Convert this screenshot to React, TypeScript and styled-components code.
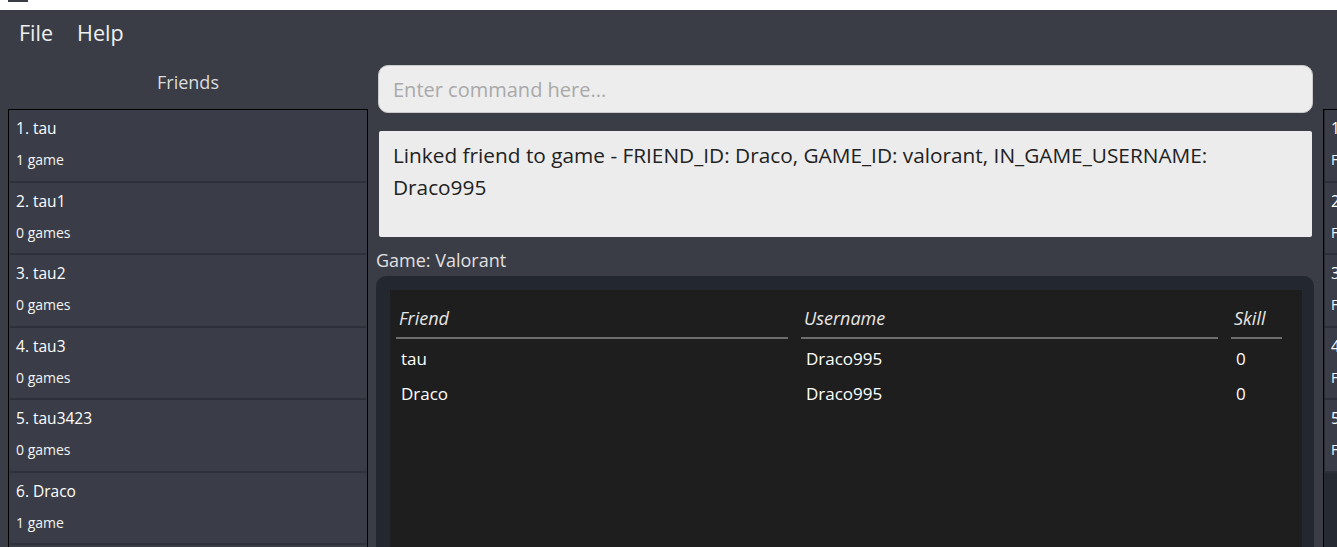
import styled, { createGlobalStyle } from "styled-components"

const GlobalStyle = createGlobalStyle`
  html, body {
    margin: 0;
    padding: 0;
    background: #3a3d46;
    overflow: hidden;
  }
  body {
    font-family: "Open Sans", "Liberation Sans", sans-serif;
  }
`

// Window chrome
const Window = styled.div`
  width: 1337px;
  height: 547px;
  overflow: hidden;
  background: #3a3d46;
  display: flex;
  flex-direction: column;
`

const TitleStrip = styled.div`
  height: 10px;
  background: #ffffff;
  flex-shrink: 0;
  padding-left: 8px;
`

const TitleIcon = styled.div`
  width: 20px;
  height: 2px;
  background: #3a3d46;
`

const MenuBar = styled.div`
  height: 45px;
  flex-shrink: 0;
  display: flex;
  align-items: center;
  gap: 24px;
  padding-left: 19px;
  color: #f0f0f0;
  font-size: 21.5px;
`

const MenuItem = styled.span`
  line-height: 45px;
`

// Main layout
const Body = styled.div`
  display: grid;
  grid-template-columns: 376px 939px 368px;
  flex: 1;
  min-height: 0;
`

const SideColumn = styled.div<{ $side: "left" | "right" }>`
  display: flex;
  flex-direction: column;
  padding-left: 8px;
  padding-right: ${p => (p.$side === "left" ? "8px" : "0")};
  min-height: 0;
`

const PanelTitle = styled.div`
  height: 54px;
  line-height: 54px;
  text-align: center;
  font-size: 18px;
  color: #dcdcdc;
  flex-shrink: 0;
`

const ListView = styled.div<{ $empty?: string }>`
  flex: 1;
  border: 1px solid #000;
  border-bottom: none;
  padding: 0 1px;
  background: ${p => p.$empty ?? "#3a3d46"};
  overflow: hidden;
`

const Cell = styled.div`
  height: 72.5px;
  box-sizing: border-box;
  background: #3a3d47;
  border-bottom: 2.5px solid #2c3038;
  padding: 8px 0 0 6px;
`

const CellTitle = styled.div`
  font-size: 15.5px;
  font-weight: 500;
  line-height: 20px;
  color: #ffffff;
  white-space: nowrap;
`

const CellSub = styled.div`
  font-size: 14px;
  line-height: 20px;
  margin-top: 12px;
  color: #f4f4f4;
  white-space: nowrap;
`

// Center column
const Center = styled.div`
  display: flex;
  flex-direction: column;
  padding-top: 10px;
  min-height: 0;
`

const CommandBox = styled.input`
  height: 48px;
  margin: 0 2px;
  box-sizing: border-box;
  border: 1px solid #c9c9c9;
  border-radius: 10px;
  background: #ededed;
  padding: 0 14px;
  font-family: "Open Sans", "Liberation Sans", sans-serif;
  font-size: 20px;
  color: #222;
  outline: none;
  &::placeholder {
    color: #a9a9a9;
  }
`

const ResultBox = styled.div`
  height: 106px;
  margin: 18px 3px 0;
  box-sizing: border-box;
  background: #ececec;
  border-radius: 2px;
  padding: 8px 30px 8px 14px;
  font-size: 20.8px;
  line-height: 32px;
  color: #222;
`

const GameLabel = styled.div`
  padding-top: 11px;
  line-height: 24px;
  font-size: 18px;
  color: #e0e0e0;
  margin-bottom: 4px;
`

const GamePanel = styled.div`
  flex: 1;
  margin-right: 1px;
  background: #232830;
  border-radius: 10px 10px 0 0;
  padding: 14px 12px 0 14px;
  display: flex;
  min-height: 0;
`

const Table = styled.div`
  flex: 1;
  background: #1e1e1e;
  padding: 0 20px 0 6px;
`

const TableGrid = styled.div`
  display: grid;
  grid-template-columns: 392px 417px 51px;
  column-gap: 13px;
`

const HeadCell = styled.div`
  padding: 16px 0 0 3px;
  height: 49px;
  box-sizing: border-box;
  border-bottom: 2px solid #6e6e6e;
  font-size: 18px;
  font-style: italic;
  line-height: 24px;
  color: #e6e6e6;
  white-space: nowrap;
`

const DataCell = styled.div`
  height: 35px;
  box-sizing: border-box;
  line-height: 35px;
  padding: 2px 0 0 5px;
  font-size: 17px;
  color: #ffffff;
`

const friends = [
  { name: "tau", games: 1 },
  { name: "tau1", games: 0 },
  { name: "tau2", games: 0 },
  { name: "tau3", games: 0 },
  { name: "tau3423", games: 0 },
  { name: "Draco", games: 1 },
]

const games = [
  { name: "Valorant", friends: 2 },
  { name: "Minecraft", friends: 0 },
  { name: "Apex", friends: 0 },
  { name: "Dota", friends: 0 },
  { name: "Overwatch", friends: 0 },
]

const rows = [
  { friend: "tau", username: "Draco995", skill: 0 },
  { friend: "Draco", username: "Draco995", skill: 0 },
]

export default function App() {
  return (
    <>
      <GlobalStyle />
      <Window>
        <TitleStrip>
          <TitleIcon />
        </TitleStrip>
        <MenuBar>
          <MenuItem>File</MenuItem>
          <MenuItem>Help</MenuItem>
        </MenuBar>
        <Body>
          <SideColumn $side="left">
            <PanelTitle>Friends</PanelTitle>
            <ListView>
              {friends.map((f, i) => (
                <Cell key={f.name}>
                  <CellTitle>
                    {i + 1}. {f.name}
                  </CellTitle>
                  <CellSub>
                    {f.games} {f.games === 1 ? "game" : "games"}
                  </CellSub>
                </Cell>
              ))}
            </ListView>
          </SideColumn>

          <Center>
            <CommandBox placeholder="Enter command here..." />
            <ResultBox>
              Linked friend to game - FRIEND_ID: Draco, GAME_ID: valorant, IN_GAME_USERNAME: Draco995
            </ResultBox>
            <GameLabel>Game: Valorant</GameLabel>
            <GamePanel>
              <Table>
                <TableGrid>
                  <HeadCell>Friend</HeadCell>
                  <HeadCell>Username</HeadCell>
                  <HeadCell>Skill</HeadCell>
                  {rows.map(r => [
                    <DataCell key={r.friend + "f"}>{r.friend}</DataCell>,
                    <DataCell key={r.friend + "u"}>{r.username}</DataCell>,
                    <DataCell key={r.friend + "s"}>{r.skill}</DataCell>,
                  ])}
                </TableGrid>
              </Table>
            </GamePanel>
          </Center>

          <SideColumn $side="right">
            <PanelTitle>Games</PanelTitle>
            <ListView $empty="#262a33">
              {games.map((g, i) => (
                <Cell key={g.name}>
                  <CellTitle>
                    {i + 1}. {g.name}
                  </CellTitle>
                  <CellSub>Friends: {g.friends}</CellSub>
                </Cell>
              ))}
            </ListView>
          </SideColumn>
        </Body>
      </Window>
    </>
  )
}
